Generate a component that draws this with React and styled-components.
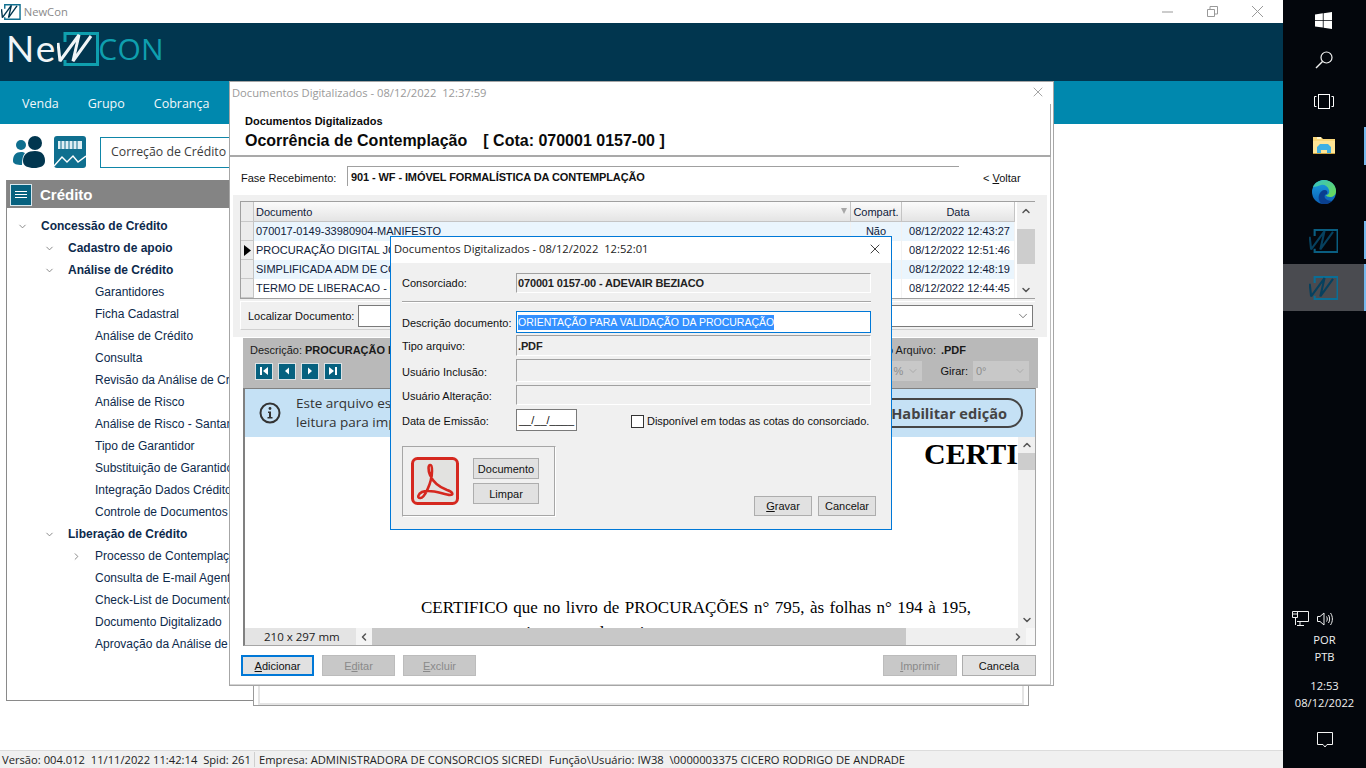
import React from 'react';
import styled, { createGlobalStyle } from 'styled-components';
import { ChevronDown, ChevronRight, ChevronUp, ChevronLeft, X } from 'lucide-react';

const Global = createGlobalStyle`
  html, body { margin: 0; padding: 0; background: #fff; overflow: hidden; }
  * { box-sizing: border-box; }
  body { font-family: "Liberation Sans", Arial, sans-serif; font-size: 11px; color: #111; }
`;

const UI_FONT = '"Open Sans", "Noto Sans", sans-serif';

const Screen = styled.div`
  position: relative;
  display: flex;
  width: 1366px;
  height: 768px;
  overflow: hidden;
`;

/* ---------- main window ---------- */

const MainWindow = styled.div`
  width: 1283px;
  height: 768px;
  display: flex;
  flex-direction: column;
  background: #fff;
`;

const AppTitleBar = styled.div`
  height: 23px;
  display: flex;
  align-items: center;
  padding-left: 1px;
  gap: 3px;
  font: 11.2px ${UI_FONT};
  color: #8a8a8a;
`;

const WinButtons = styled.div`
  margin-left: auto;
  display: flex;
  align-items: center;
  gap: 34px;
  padding-right: 20px;
`;

const LogoBar = styled.div`
  height: 58px;
  background: #01364f;
  display: flex;
  align-items: flex-start;
  padding: 9px 0 0 6px;
`;

const LogoNe = styled.span`
  font: 400 37px/34px Lato, sans-serif;
  letter-spacing: 2px;
  color: #f1f5f7;
  margin: -1px 0 0 0;
`;

const LogoCon = styled.span`
  font: 400 30px/34px ${UI_FONT};
  color: #0f9fae;
  margin: 0 0 0 -1px;
  letter-spacing: 0.3px;
`;

const MenuBar = styled.nav`
  height: 43px;
  background: #0088ae;
  display: flex;
  align-items: center;
  padding: 2px 0 0 22px;
  gap: 29px;
  font: 12.5px ${UI_FONT};
  color: #f2f7fa;
`;

const Content = styled.main`
  flex: 1;
  display: flex;
  flex-direction: column;
  padding-left: 6px;
`;

const ToolRow = styled.div`
  display: flex;
  align-items: center;
  height: 56px;
  padding-left: 7px;
`;

const ToolIcon = styled.svg`
  width: 32px;
  height: 32px;
  margin-right: 9px;
`;

const SearchBox = styled.div`
  width: 180px;
  height: 31px;
  margin-left: 5px;
  border: 1px solid #0f86a8;
  padding: 0 0 2px 10px;
  display: flex;
  align-items: center;
  font: 12.3px ${UI_FONT};
  color: #3c3c3c;
`;

const SidePanel = styled.section`
  width: 250px;
  height: 521px;
  border: 1px solid #8a8a8a;
  border-top: 0;
`;

const PanelHead = styled.header`
  height: 28px;
  background: #848484;
  display: flex;
  align-items: center;
  gap: 8px;
  padding: 1px 0 0 3px;
  font-size: 15px;
  font-weight: 700;
  color: #fff;
`;

const HamburgerBox = styled.span`
  width: 22px;
  height: 22px;
  background: #06617f;
  border: 1px solid #d8e8ee;
  display: flex;
  flex-direction: column;
  justify-content: center;
  gap: 2px;
  padding: 0 4px;
  i { display: block; height: 1px; background: #fff; }
`;

const Tree = styled.ul`
  list-style: none;
  margin: 0;
  padding: 7px 0 0;
`;

const TreeRow = styled.li`
  height: 22px;
  display: flex;
  align-items: center;
  padding-left: ${p => p.$level * 27 + 10}px;
  font-size: 12px;
  font-weight: ${p => (p.$level < 2 ? 700 : 400)};
  color: #0d2a4c;
  white-space: nowrap;
  overflow: hidden;
`;

const TreeArrow = styled.span`
  width: 24px;
  flex: none;
  display: flex;
  align-items: center;
  color: #808080;
`;

const StatusBar = styled.footer`
  height: 18px;
  background: #f0f0f0;
  border-top: 1px solid #dcdcdc;
  display: flex;
  align-items: center;
  font: 11.2px ${UI_FONT};
  color: #222;
  white-space: nowrap;
`;

const StatusCell = styled.span`
  width: ${p => p.$w}px;
  flex: none;
  padding-left: ${p => p.$pad}px;
  overflow: hidden;
  white-space: pre;
  ${p => p.$line && 'border-right: 1px solid #cfcfcf;'}
`;

/* ---------- windows on the desktop ---------- */

const BackWindow = styled.div`
  position: absolute;
  left: 253px;
  top: 400px;
  width: 776px;
  height: 306px;
  background: #fff;
  border: 1px solid #9a9a9a;
  padding: 4px;
  &::after {
    content: '';
    display: block;
    height: 100%;
    border: 2px solid #e4e4e4;
  }
`;

const DocWindow = styled.div`
  position: absolute;
  left: 229px;
  top: 81px;
  width: 825px;
  height: 605px;
  display: flex;
  flex-direction: column;
  background: #fff;
  border: 1px solid #a6a6a6;
`;

const DocTitle = styled.div`
  height: 22px;
  flex: none;
  display: flex;
  align-items: center;
  justify-content: space-between;
  padding: 0 7px 2px 2px;
  font: 11.2px ${UI_FONT};
  color: #9a9a9a;
  white-space: pre;
`;

const DocHeader = styled.header`
  height: 53px;
  flex: none;
  padding: 10px 0 0 15px;
  border-bottom: 2px solid #a9a9a9;
  border-right: 1px solid #a9a9a9;
  margin-right: 2px;
`;

const HeadSmall = styled.div`
  font-size: 11px;
  font-weight: 700;
  line-height: 14px;
  color: #0a0a0a;
`;

const HeadBig = styled.div`
  display: flex;
  gap: 16px;
  font-size: 16px;
  font-weight: 700;
  line-height: 21px;
  margin-top: 2px;
  color: #0a0a0a;
  white-space: pre;
`;

const DocBody = styled.div`
  flex: 1;
  display: flex;
  flex-direction: column;
  margin-right: 2px;
  border-right: 1px solid #bdbdbd;
  border-bottom: 1px solid #d4d4d4;
`;

const FaseRow = styled.div`
  height: 38px;
  flex: none;
  display: flex;
  align-items: center;
  padding-left: 11px;
`;

const FaseLabel = styled.span`
  width: 106px;
  margin-top: 3px;
`;

const FaseValue = styled.div`
  width: 612px;
  height: 20px;
  padding: 1px 0 0 3px;
  display: flex;
  align-items: center;
  font-weight: 700;
  letter-spacing: -0.1px;
  border-top: 1px solid #a0a0a0;
  border-left: 1px solid #a0a0a0;
`;

const BackLink = styled.span`
  margin: 4px 0 0 24px;
  u { text-decoration: underline; }
`;

const GridPanel = styled.div`
  height: 142px;
  flex: none;
  margin: 0 3px;
  padding: 6px 0 0 7px;
  background: #f0f0f0;
`;

const GridBox = styled.div`
  width: 795px;
  height: 98px;
  display: flex;
  border: 1px solid #a0a0a0;
  background: #fff;
`;

const GridTable = styled.div`
  flex: 1;
  display: grid;
  grid-template-columns: 13px 597px 51px 113px;
  grid-template-rows: 20px;
  grid-auto-rows: 19px;
  align-content: start;
`;

const GridHead = styled.div`
  display: flex;
  align-items: center;
  justify-content: ${p => p.$align || 'flex-start'};
  padding: 0 2px;
  background: linear-gradient(#fbfbfb, #e4e4e4);
  border-right: 1px solid #c4c4c4;
  border-bottom: 1px solid #c4c4c4;
  color: #10213a;
  position: relative;
`;

const RowMark = styled.div`
  background: #ececec;
  border-right: 1px solid #c4c4c4;
  border-bottom: 1px solid #c8c8c8;
  display: flex;
  align-items: center;
  justify-content: center;
`;

const GridCell = styled.div`
  display: flex;
  align-items: center;
  justify-content: ${p => p.$align || 'flex-start'};
  padding: 0 ${p => (p.$date ? 0 : 2)}px 2px ${p => (p.$date ? 3 : 2)}px;
  background: ${p => (p.$alt ? '#eaf5fd' : '#fff')};
  border-right: 1px solid #f2f2f2;
  color: #10213a;
  white-space: nowrap;
  overflow: hidden;
`;

const SortMark = styled.span`
  position: absolute;
  right: 3px;
  top: 6px;
  width: 0;
  height: 0;
  border-left: 3px solid transparent;
  border-right: 3px solid transparent;
  border-top: 6px solid #a8a8a8;
`;

const VScroll = styled.div`
  width: ${p => p.$w}px;
  flex: none;
  margin-left: ${p => p.$gap || 0}px;
  display: flex;
  flex-direction: column;
  align-items: center;
  background: #f0f0f0;
  color: #555;
`;

const ScrollEnd = styled.div`
  height: ${p => p.$h}px;
  flex: none;
  display: flex;
  align-items: center;
  justify-content: center;
`;

const ScrollGap = styled.div`
  flex: ${p => (p.$grow ? 1 : 'none')};
  height: ${p => p.$h}px;
`;

const ScrollThumb = styled.div`
  width: 100%;
  height: ${p => p.$h}px;
  flex: none;
  background: #cdcdcd;
`;

const LocateRow = styled.div`
  width: 795px;
  height: 29px;
  margin-top: 2px;
  display: flex;
  align-items: center;
  padding-left: 7px;
  border-top: 1px solid #fff;
  border-left: 1px solid #fff;
  border-bottom: 1px solid #d0d0d0;
  gap: 4px;
  white-space: nowrap;
`;

const LocateInput = styled.div`
  width: 675px;
  height: 22px;
  flex: none;
  background: #fff;
  border: 1px solid #7a7a7a;
  display: flex;
  align-items: center;
  justify-content: flex-end;
  padding-right: 2px;
  color: #444;
`;

const ViewerBar = styled.div`
  width: 795px;
  height: 50px;
  flex: none;
  margin: 1px 0 0 13px;
  background: #b9b9b9;
  padding: 4px 0 0 7px;
`;

const BarTop = styled.div`
  height: 15px;
  display: flex;
  align-items: center;
  color: #1a1a1a;
`;

const BarBottom = styled.div`
  display: flex;
  align-items: center;
  margin-top: 4px;
  gap: 5px;
  padding-left: 5px;
`;

const BarStrong = styled.b`
  font-weight: 700;
  margin-left: ${p => p.$gap || 3}px;
`;

const BarLabel = styled.span`
  margin-left: ${p => p.$gap || 0}px;
`;

const BarPush = styled.span`
  margin-left: auto;
`;

const BarEnd = styled.span`
  width: ${p => p.$w}px;
  flex: none;
`;

const NavButton = styled.div`
  width: 18px;
  height: 17px;
  background: #06617f;
  border: 1px solid #dbe3e6;
  display: flex;
  align-items: center;
  justify-content: center;
`;

const BarSelect = styled.div`
  width: ${p => p.$w}px;
  height: 20px;
  background: #c8c8c8;
  color: #8d8d8d;
  display: flex;
  align-items: center;
  justify-content: space-between;
  padding: 0 3px 0 ${p => p.$pad || 3}px;
`;

const Viewer = styled.div`
  width: 793px;
  height: 258px;
  flex: none;
  margin-left: 13px;
  display: flex;
  flex-direction: column;
  border-top: 1px solid #808080;
  border-left: 2px solid #808080;
  border-right: 1px solid #a6a6a6;
  border-bottom: 1px solid #a6a6a6;
  background: #fff;
`;

const InfoBar = styled.div`
  height: 48px;
  flex: none;
  background: #c5e1f5;
  display: flex;
  align-items: center;
  padding-left: 14px;
  font: 13.5px/19px ${UI_FONT};
  color: #333;
  white-space: nowrap;
`;

const InfoText = styled.div`
  margin-left: 15px;
  width: 500px;
`;

const EnableButton = styled.div`
  margin-left: 59px;
  width: 168px;
  height: 30px;
  border: 2px solid #454545;
  border-radius: 15px;
  display: flex;
  align-items: center;
  justify-content: flex-end;
  padding-right: 14px;
  font: 700 14.6px ${UI_FONT};
  color: #444;
`;

const PageArea = styled.div`
  flex: 1;
  display: flex;
  min-height: 0;
`;

const Page = styled.div`
  flex: 1;
  overflow: hidden;
  font-family: "Liberation Serif", "Times New Roman", serif;
  color: #000;
  white-space: nowrap;
`;

const PageTitle = styled.div`
  font-size: 30px;
  font-weight: 700;
  line-height: 34px;
  padding-left: 679px;
`;

const PageLine = styled.div`
  font-size: 17px;
  line-height: 25px;
  word-spacing: 1.2px;
  padding-left: ${p => p.$indent}px;
  margin-top: ${p => p.$top || 0}px;
`;

const HScrollRow = styled.div`
  height: 17px;
  flex: none;
  display: flex;
  align-items: center;
  background: #efefef;
  color: #555;
`;

const SizeLabel = styled.div`
  width: 111px;
  height: 100%;
  background: #e4e4e4;
  padding-left: 19px;
  display: flex;
  align-items: center;
  font: 11.5px ${UI_FONT};
  color: #222;
`;

const HButton = styled.div`
  width: ${p => p.$w}px;
  height: 100%;
  flex: ${p => (p.$grow ? 1 : 'none')};
  display: flex;
  align-items: center;
  justify-content: center;
  background: ${p => p.$bg || 'transparent'};
`;

const ButtonRow = styled.div`
  display: flex;
  padding: 9px 0 0 11px;
  gap: 8px;
`;

const FlatButton = styled.div`
  width: ${p => p.$w || 73}px;
  height: ${p => p.$h || 21}px;
  margin-left: ${p => p.$gap || 0}px;
  display: flex;
  align-items: center;
  justify-content: center;
  background: ${p => (p.$off ? '#c8c8c8' : '#e1e1e1')};
  border: ${p => (p.$focus ? '2px solid #0078d7' : p.$off ? '1px solid #bcbcbc' : '1px solid #adadad')};
  color: ${p => (p.$off ? '#8a8a8a' : '#111')};
  flex: none;
  u { text-decoration: underline; }
`;

/* ---------- dialog ---------- */

const Dialog = styled.div`
  position: absolute;
  left: 390px;
  top: 236px;
  width: 502px;
  height: 294px;
  background: #f0f0f0;
  border: 1px solid #0078d7;
  display: flex;
  flex-direction: column;
`;

const DialogTitle = styled.div`
  height: 26px;
  flex: none;
  background: #fff;
  display: flex;
  align-items: center;
  justify-content: space-between;
  padding: 0 8px 3px 3px;
  font: 11.2px ${UI_FONT};
  color: #1c1c1c;
  white-space: pre;
`;

const DialogBody = styled.div`
  flex: 1;
  padding: 10px 15px 0 11px;
  display: flex;
  flex-direction: column;
`;

const FieldRow = styled.div`
  display: grid;
  grid-template-columns: 114px 355px;
  align-items: center;
  height: ${p => p.$h}px;
  margin-bottom: ${p => p.$mb || 0}px;
`;

const FieldLabel = styled.span`
  margin-top: ${p => p.$drop || 0}px;
`;

const Field = styled.div`
  height: 100%;
  padding-left: 1px;
  display: flex;
  align-items: center;
  font-weight: 700;
  letter-spacing: -0.15px;
  color: #222;
  border-top: 1px solid #a0a0a0;
  border-left: 1px solid #a0a0a0;
  border-bottom: 1px solid #fff;
  border-right: 1px solid #fff;
`;

const Rule = styled.div`
  width: 469px;
  height: 2px;
  margin: 8px 0 8px;
  background: #a6a6a6;
  border-bottom: 1px solid #fff;
`;

const TextInput = styled.div`
  height: 100%;
  background: #fff;
  border: 1px solid #0078d7;
  padding-left: 1px;
  display: flex;
  align-items: center;
`;

const Selected = styled.span`
  background: #3390ff;
  color: #fff;
  font-size: 10.5px;
  line-height: 15px;
  white-space: nowrap;
`;

const DateRow = styled.div`
  display: flex;
  align-items: center;
  height: 22px;
  margin-top: 4px;
`;

const DateLabel = styled.span`
  width: 114px;
  flex: none;
  margin-top: 2px;
`;

const DateInput = styled.div`
  width: 61px;
  height: 100%;
  background: #fff;
  border: 1px solid #7a7a7a;
  padding-left: 2px;
  display: flex;
  align-items: center;
  font-size: 11px;
  color: #111;
`;

const CheckLabel = styled.label`
  display: flex;
  align-items: center;
  margin: 2px 0 0 54px;
  gap: 3px;
  letter-spacing: -0.05px;
  white-space: nowrap;
`;

const CheckBox = styled.span`
  width: 13px;
  height: 13px;
  background: #fff;
  border: 1px solid #333;
`;

const DialogFooter = styled.div`
  display: flex;
  align-items: flex-end;
  justify-content: space-between;
  margin-top: 15px;
`;

const PdfGroup = styled.div`
  width: 154px;
  height: 71px;
  display: flex;
  align-items: flex-start;
  gap: 14px;
  padding: 10px 0 0 8px;
  border: 1px solid;
  border-color: #a6a6a6 #fff #fff #a6a6a6;
  box-shadow: inset -1px -1px 0 #a6a6a6;
`;

const PdfButtons = styled.div`
  display: flex;
  flex-direction: column;
  gap: 4px;
  margin-top: 1px;
`;

const FooterButtons = styled.div`
  display: flex;
  gap: 6px;
  padding-bottom: 1px;
`;

/* ---------- taskbar ---------- */

const Taskbar = styled.aside`
  width: 83px;
  height: 768px;
  flex: none;
  background: #03060c;
  display: flex;
  flex-direction: column;
  color: #f0f0f0;
  font: 11.2px ${UI_FONT};
`;

const TaskItem = styled.div`
  height: ${p => p.$h || 47}px;
  flex: none;
  display: flex;
  align-items: center;
  justify-content: center;
  padding: 0 2px ${p => (p.$lift ? 3 : 0)}px 0;
  position: relative;
  background: ${p => (p.$active ? '#4a4b50' : 'transparent')};
  &::after {
    content: '';
    display: ${p => (p.$open ? 'block' : 'none')};
    position: absolute;
    right: 0;
    top: ${p => (p.$active ? 0 : 4)}px;
    bottom: ${p => (p.$active ? 0 : 5)}px;
    width: 2px;
    background: #76b9ed;
  }
`;

const TaskTray = styled.div`
  margin-top: auto;
  display: flex;
  flex-direction: column;
  align-items: center;
  padding-bottom: 13px;
`;

const TrayIcons = styled.div`
  align-self: flex-start;
  display: flex;
  align-items: center;
  gap: 8px;
  padding-left: 9px;
  margin-bottom: 4px;
`;

const TrayLine = styled.div`
  line-height: 17px;
  text-align: center;
  margin-top: ${p => p.$gap || 0}px;
`;

const NotifyButton = styled.div`
  margin-top: 14px;
  height: 30px;
  display: flex;
  align-items: center;
`;

/* ---------- drawings ---------- */

const BrandMark = ({ size, stroke, ink }) => (
  <svg width={size * 42 / 34} height={size} viewBox="0 0 42 34" fill="none">
    <path d="M8 10V1.5H40.5V32.5H8V28" stroke={stroke} strokeWidth="3" />
    <path d="M1 11L3 29L22 3L16 29L34 4" stroke={ink} strokeWidth="3" strokeLinejoin="bevel" />
  </svg>
);

const PeopleIcon = () => (
  <ToolIcon viewBox="0 0 32 32">
    <circle cx="8" cy="9" r="5" fill="#0f6f8f" />
    <path d="M0 25c0-6 3-9 8-9 2 0 3 .5 4 1-2 2-3 6-3 12-5 0-9-1-9-4z" fill="#0f6f8f" />
    <circle cx="22" cy="7" r="7" fill="#01364f" />
    <path d="M10 25c0-7 5-10 12-10s10 4 10 10c0 5-5 7-11 7s-11-2-11-7z" fill="#01364f" />
  </ToolIcon>
);

const ChartIcon = () => (
  <ToolIcon viewBox="0 0 32 32">
    <rect width="32" height="32" rx="3" fill="#0f6f8f" />
    <rect x="4" y="5" width="24" height="8" fill="#dfeff4" />
    <path d="M7 5v8M11 5v8M15 5v8M19 5v8M23 5v8" stroke="#0f6f8f" />
    <path d="M0 30L8 21L13 26L19 20L24 26L32 20" stroke="#fff" strokeWidth="1.4" fill="none" />
  </ToolIcon>
);

const NavIcon = ({ d }) => (
  <svg width="10" height="10" viewBox="0 0 10 10" fill="#fff"><path d={d} /></svg>
);

const InfoIcon = () => (
  <svg width="22" height="22" viewBox="0 0 22 22" fill="none">
    <circle cx="11" cy="11" r="9.5" stroke="#333" strokeWidth="2" />
    <circle cx="11" cy="6.5" r="1.4" fill="#333" />
    <path d="M9 9.5H12V15H13.5V16.5H8.5V15H10V11H9z" fill="#333" />
  </svg>
);

const PdfIcon = () => (
  <svg width="48" height="48" viewBox="0 0 48 48" fill="none">
    <rect x="1.5" y="1.5" width="45" height="45" rx="5" fill="#e2e2e0" stroke="#d5281f" strokeWidth="3" />
    <path
      d="M19.5 8C17 7.5 17 13 19 18C22 25 28 30 36 33C42 35 43 38 39 38C33 38 20 31 11 35C7 37 6 41 9 41C13 42 21 26 21 14C21 11 21 8 19.5 8Z"
      stroke="#d5281f"
      strokeWidth="2.6"
      strokeLinejoin="round"
    />
  </svg>
);

const WinLogo = () => (
  <svg width="17" height="17" viewBox="0 0 17 17" fill="#fff">
    <path d="M0 2.6L7.8 1.3V8H0zM8.6 1.2L17 0V8H8.6zM0 8.8H7.8V15.6L0 14.4zM8.6 8.8H17V17L8.6 15.8z" />
  </svg>
);

const SearchGlyph = () => (
  <svg width="18" height="18" viewBox="0 0 18 18" fill="none" stroke="#f2f2f2" strokeWidth="1.2">
    <circle cx="11.5" cy="6.5" r="5.5" />
    <path d="M7.5 10.5L1 17" strokeWidth="1.5" />
  </svg>
);

const TaskViewGlyph = () => (
  <svg width="20" height="15" viewBox="0 0 20 15" fill="none" stroke="#fff" strokeWidth="1">
    <rect x="4.5" y=".5" width="11" height="14" />
    <path d="M2.5 2.5H.5V12.5H2.5M17.5 2.5H19.5V12.5H17.5" />
  </svg>
);

const FolderGlyph = () => (
  <svg width="22" height="18" viewBox="0 0 22 18">
    <path d="M0 1h8l2 2h12v15H0z" fill="#f9d77a" />
    <path d="M0 5h22v13H0z" fill="#ffe596" />
    <path d="M4 1h4v2H4z" fill="#fff6cf" />
    <path d="M4 18V11l3-3h8l3 3v7h-4v-4H8v4z" fill="#3fb0e4" />
    <path d="M8 14h6v4H8z" fill="#ffe596" />
    <path d="M0 17h22v1H0z" fill="#c9a23f" />
  </svg>
);

const EdgeGlyph = () => (
  <svg width="24" height="24" viewBox="0 0 24 24">
    <defs>
      <linearGradient id="edgeA" x1="0" y1="0" x2="1" y2="1">
        <stop offset="0" stopColor="#33c1c8" />
        <stop offset="1" stopColor="#6fdc4e" />
      </linearGradient>
      <linearGradient id="edgeB" x1="0" y1="0" x2="0" y2="1">
        <stop offset="0" stopColor="#1a9fe0" />
        <stop offset="1" stopColor="#0b5fb5" />
      </linearGradient>
    </defs>
    <circle cx="12" cy="12" r="12" fill="url(#edgeB)" />
    <path d="M1 7C3 2 8 0 12 0c7 0 12 5 12 11 0 4-3 6-6 6-2 0-4-1-4-2 2 0 4-2 3-5-1-4-5-6-8-5C6 6 3 7 1 7z" fill="url(#edgeA)" />
    <path d="M10 24c-3-2-4-5-3-9 1-3 3-5 6-5 2 0 3 2 2 4-2 0-3 2-2 4 1 2 4 3 7 3-2 2-6 4-10 3z" fill="#0a3f8f" />
  </svg>
);

const TrayNetwork = () => (
  <svg width="17" height="16" viewBox="0 0 17 16" fill="none" stroke="#f0f0f0">
    <path d="M3 .5H16.5V10.5H5" />
    <path d="M.5 .5H5.5V6.5H.5zM1 3H5M3.5 6.5V14M8 11v3M5 14.5h7" />
  </svg>
);

const TraySound = () => (
  <svg width="17" height="14" viewBox="0 0 17 14" fill="none" stroke="#f0f0f0">
    <path d="M.5 4.5H3L7 1V13L3 9.5H.5z" />
    <path d="M9.5 4.5c1 1.5 1 3.5 0 5M11.5 3c1.5 2.5 1.5 5.5 0 8M13.5 1c2.5 3.5 2.5 8.5 0 12" />
  </svg>
);

const NotifyGlyph = () => (
  <svg width="16" height="16" viewBox="0 0 16 16" fill="none" stroke="#f4f4f4">
    <path d="M.5 .5H15.5V12.5H10L8 15L6 12.5H.5z" />
  </svg>
);

/* ---------- data ---------- */

const treeItems = [
  ['Concessão de Crédito', 0, 'down'],
  ['Cadastro de apoio', 1, 'down'],
  ['Análise de Crédito', 1, 'down'],
  ['Garantidores', 2],
  ['Ficha Cadastral', 2],
  ['Análise de Crédito', 2],
  ['Consulta', 2],
  ['Revisão da Análise de Crédito', 2],
  ['Análise de Risco', 2],
  ['Análise de Risco - Santander', 2],
  ['Tipo de Garantidor', 2],
  ['Substituição de Garantidor', 2],
  ['Integração Dados Crédito', 2],
  ['Controle de Documentos', 2],
  ['Liberação de Crédito', 1, 'down'],
  ['Processo de Contemplação', 2, 'right'],
  ['Consulta de E-mail Agente', 2],
  ['Check-List de Documentos', 2],
  ['Documento Digitalizado', 2],
  ['Aprovação da Análise de Crédito', 2],
];

const rows = [
  ['070017-0149-33980904-MANIFESTO', 'Não', '08/12/2022 12:43:27'],
  ['PROCURAÇÃO DIGITAL JOCELI', '', '08/12/2022 12:51:46'],
  ['SIMPLIFICADA ADM DE CONSORCIO', '', '08/12/2022 12:48:19'],
  ['TERMO DE LIBERACAO - 070001', '', '08/12/2022 12:44:45'],
];

const TreeLine = ({ label, level, arrow }) => (
  <TreeRow $level={level}>
    <TreeArrow>
      {arrow === 'down' && <ChevronDown size={11} />}
      {arrow === 'right' && <ChevronRight size={11} />}
    </TreeArrow>
    {label}
  </TreeRow>
);

const App = () => (
  <Screen>
    <Global />
    <MainWindow>
      <AppTitleBar>
        <BrandMark size={16} stroke="#0f6f8f" ink="#01364f" />
        NewCon
        <WinButtons>
          <svg width="11" height="2"><path d="M0 1H11" stroke="#999" /></svg>
          <svg width="11" height="11" fill="none" stroke="#999">
            <path d="M.5 3.5H7.5V10.5H.5zM3 3V.5H10.5V8H8" />
          </svg>
          <svg width="11" height="11" stroke="#999"><path d="M0 0L11 11M11 0L0 11" /></svg>
        </WinButtons>
      </AppTitleBar>
      <LogoBar>
        <LogoNe>Ne</LogoNe>
        <BrandMark size={34} stroke="#0f9fae" ink="#f1f5f7" />
        <LogoCon>CON</LogoCon>
      </LogoBar>
      <MenuBar>
        <span>Venda</span>
        <span>Grupo</span>
        <span>Cobrança</span>
      </MenuBar>
      <Content>
        <ToolRow>
          <PeopleIcon />
          <ChartIcon />
          <SearchBox>Correção de Crédito</SearchBox>
        </ToolRow>
        <SidePanel>
          <PanelHead>
            <HamburgerBox><i /><i /><i /></HamburgerBox>
            Crédito
          </PanelHead>
          <Tree>
            {treeItems.map(([label, level, arrow], i) => (
              <TreeLine key={i} label={label} level={level} arrow={arrow} />
            ))}
          </Tree>
        </SidePanel>
      </Content>
      <StatusBar>
        <StatusCell $w={255} $pad={2} $line>Versão: 004.012  11/11/2022 11:42:14  Spid: 261</StatusCell>
        <StatusCell $w={292} $pad={4}>Empresa: ADMINISTRADORA DE CONSORCIOS SICREDI</StatusCell>
        <StatusCell $w={500} $pad={2}>Função\Usuário: IW38  \0000003375 CICERO RODRIGO DE ANDRADE</StatusCell>
      </StatusBar>
    </MainWindow>

    <Taskbar>
      <TaskItem $h={40}><WinLogo /></TaskItem>
      <TaskItem $h={40}><SearchGlyph /></TaskItem>
      <TaskItem $h={43}><TaskViewGlyph /></TaskItem>
      <TaskItem $open $lift><FolderGlyph /></TaskItem>
      <TaskItem $lift><EdgeGlyph /></TaskItem>
      <TaskItem $open><BrandMark size={24} stroke="#0a5d80" ink="#06405e" /></TaskItem>
      <TaskItem $open $active><BrandMark size={24} stroke="#0a6e96" ink="#06405e" /></TaskItem>
      <TaskTray>
        <TrayIcons><TrayNetwork /><TraySound /></TrayIcons>
        <TrayLine>POR</TrayLine>
        <TrayLine>PTB</TrayLine>
        <TrayLine $gap={12}>12:53</TrayLine>
        <TrayLine>08/12/2022</TrayLine>
        <NotifyButton><NotifyGlyph /></NotifyButton>
      </TaskTray>
    </Taskbar>

    <BackWindow />

    <DocWindow>
      <DocTitle>
        Documentos Digitalizados - 08/12/2022  12:37:59
        <X size={16} strokeWidth={1} color="#777" />
      </DocTitle>
      <DocHeader>
        <HeadSmall>Documentos Digitalizados</HeadSmall>
        <HeadBig>
          <span>Ocorrência de Contemplação</span>
          <span>[ Cota: 070001 0157-00 ]</span>
        </HeadBig>
      </DocHeader>
      <DocBody>
        <FaseRow>
          <FaseLabel>Fase Recebimento:</FaseLabel>
          <FaseValue>901 - WF - IMÓVEL FORMALÍSTICA DA CONTEMPLAÇÃO</FaseValue>
          <BackLink>&lt; <u>V</u>oltar</BackLink>
        </FaseRow>
        <GridPanel>
          <GridBox>
            <GridTable>
              <RowMark />
              <GridHead>Documento<SortMark /></GridHead>
              <GridHead $align="center">Compart.</GridHead>
              <GridHead $align="center">Data</GridHead>
              {rows.map(([doc, shared, date], i) => (
                <React.Fragment key={i}>
                  <RowMark>
                    {i === 1 && (
                      <svg width="7" height="11" viewBox="0 0 7 11"><path d="M0 0L7 5.5L0 11z" fill="#000" /></svg>
                    )}
                  </RowMark>
                  <GridCell $alt={i % 2 === 0}>{doc}</GridCell>
                  <GridCell $alt={i % 2 === 0} $align="center">{shared}</GridCell>
                  <GridCell $alt={i % 2 === 0} $align="center" $date>{date}</GridCell>
                </React.Fragment>
              ))}
            </GridTable>
            <VScroll $w={18} $gap={2}>
              <ScrollEnd $h={17}><ChevronUp size={12} strokeWidth={3} /></ScrollEnd>
              <ScrollGap $h={10} />
              <ScrollThumb $h={35} />
              <ScrollGap $grow />
              <ScrollEnd $h={17}><ChevronDown size={12} strokeWidth={3} /></ScrollEnd>
            </VScroll>
          </GridBox>
          <LocateRow>
            Localizar Documento:
            <LocateInput><ChevronDown size={14} strokeWidth={1.2} /></LocateInput>
          </LocateRow>
        </GridPanel>
        <ViewerBar>
          <BarTop>
            Descrição:<BarStrong>PROCURAÇÃO DIGITAL JOCELI</BarStrong>
            <BarPush>Tipo Arquivo:</BarPush>
            <BarStrong $gap={5}>.PDF</BarStrong>
            <BarEnd $w={72} />
          </BarTop>
          <BarBottom>
            <NavButton><NavIcon d="M1 1H3V9H1zM9 1V9L4 5z" /></NavButton>
            <NavButton><NavIcon d="M7 1.5V8.5L3 5z" /></NavButton>
            <NavButton><NavIcon d="M3 1.5V8.5L7 5z" /></NavButton>
            <NavButton><NavIcon d="M7 1H9V9H7zM1 1V9L6 5z" /></NavButton>
            <BarPush />
            <BarSelect $w={50} $pad={22}>%<ChevronDown size={12} strokeWidth={1} /></BarSelect>
            <BarLabel $gap={14}>Girar:</BarLabel>
            <BarSelect $w={56}>0°<ChevronDown size={12} strokeWidth={1} /></BarSelect>
            <BarEnd $w={4} />
          </BarBottom>
        </ViewerBar>
        <Viewer>
          <InfoBar>
            <InfoIcon />
            <InfoText>
              Este arquivo está protegido e foi aberto no modo somente<br />
              leitura para impedir alterações acidentais.
            </InfoText>
            <EnableButton>Habilitar edição</EnableButton>
          </InfoBar>
          <PageArea>
            <Page>
              <PageTitle>CERTIDÃO</PageTitle>
              <PageLine $indent={176} $top={124}>
                CERTIFICO que no livro de PROCURAÇÕES n° 795, às folhas n° 194 à 195,
              </PageLine>
              <PageLine $indent={205}>consta escrito o teor do registro</PageLine>
            </Page>
            <VScroll $w={17}>
              <ScrollEnd $h={16}><ChevronUp size={12} strokeWidth={3} /></ScrollEnd>
              <ScrollThumb $h={17} />
              <ScrollGap $grow />
              <ScrollEnd $h={17}><ChevronDown size={12} strokeWidth={3} /></ScrollEnd>
            </VScroll>
          </PageArea>
          <HScrollRow>
            <SizeLabel>210 x 297 mm</SizeLabel>
            <HButton $w={16} $bg="#f4f4f4"><ChevronLeft size={12} strokeWidth={3} /></HButton>
            <HButton $w={534} $bg="#c8c8c8" />
            <HButton $w={104} />
            <HButton $w={16}><ChevronRight size={12} strokeWidth={3} /></HButton>
            <HButton $grow $bg="#f7f7f7" />
          </HScrollRow>
        </Viewer>
        <ButtonRow>
          <FlatButton $focus><span><u>A</u>dicionar</span></FlatButton>
          <FlatButton $off><span>E<u>d</u>itar</span></FlatButton>
          <FlatButton $off><span><u>E</u>xcluir</span></FlatButton>
          <FlatButton $off $w={74} $gap={399}><span><u>I</u>mprimir</span></FlatButton>
          <FlatButton $w={74} $gap={-3}>Cancela</FlatButton>
        </ButtonRow>
      </DocBody>
    </DocWindow>

    <Dialog>
      <DialogTitle>
        Documentos Digitalizados - 08/12/2022  12:52:01
        <X size={16} strokeWidth={1.2} color="#111" />
      </DialogTitle>
      <DialogBody>
        <FieldRow $h={20}>
          <FieldLabel>Consorciado:</FieldLabel>
          <Field>070001 0157-00 - ADEVAIR BEZIACO</Field>
        </FieldRow>
        <Rule />
        <FieldRow $h={22} $mb={2}>
          <FieldLabel $drop={2}>Descrição documento:</FieldLabel>
          <TextInput><Selected>ORIENTAÇÃO PARA VALIDAÇÃO DA PROCURAÇÃO</Selected></TextInput>
        </FieldRow>
        <FieldRow $h={21} $mb={3}>
          <FieldLabel>Tipo arquivo:</FieldLabel>
          <Field>.PDF</Field>
        </FieldRow>
        <FieldRow $h={23} $mb={3}>
          <FieldLabel $drop={2}>Usuário Inclusão:</FieldLabel>
          <Field />
        </FieldRow>
        <FieldRow $h={20}>
          <FieldLabel $drop={2}>Usuário Alteração:</FieldLabel>
          <Field />
        </FieldRow>
        <DateRow>
          <DateLabel>Data de Emissão:</DateLabel>
          <DateInput>__/__/____</DateInput>
          <CheckLabel><CheckBox />Disponível em todas as cotas do consorciado.</CheckLabel>
        </DateRow>
        <DialogFooter>
          <PdfGroup>
            <PdfIcon />
            <PdfButtons>
              <FlatButton $w={66}>Documento</FlatButton>
              <FlatButton $w={66}>Limpar</FlatButton>
            </PdfButtons>
          </PdfGroup>
          <FooterButtons>
            <FlatButton $w={58} $h={20}><span><u>G</u>ravar</span></FlatButton>
            <FlatButton $w={58} $h={20}>Cancelar</FlatButton>
          </FooterButtons>
        </DialogFooter>
      </DialogBody>
    </Dialog>
  </Screen>
);

export default App;
